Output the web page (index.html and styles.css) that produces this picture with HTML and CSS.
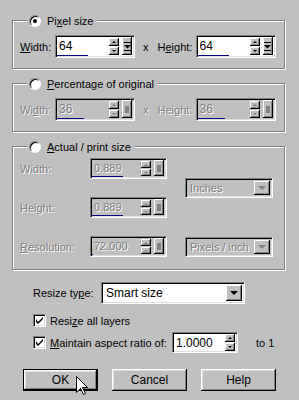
FILE: index.html
```html
<!DOCTYPE html>
<html lang="en">
<head>
    <meta charset="utf-8" />
    <title>Resize</title>
    <link rel="stylesheet" href="styles.css">
</head>
<body>
    <div class="dialog">
        <div class="group">
            <div class="group-title"><span class="radio on"></span><span>Pi<u>x</u>el size</span></div>
            <div class="row">
                <span class="lbl-w"><u>W</u>idth:</span>
                <div class="num">
                    <div class="num-main">
                        <span class="val">64</span>
                        <span class="spin"><i class="sb up"></i><i class="sb dn"></i></span>
                        <span class="pop"><svg width="7" height="9" viewBox="0 0 7 9"><rect x="0" y="0" width="7" height="1" fill="#000"/><path d="M0 3h7l-3.5 3.5z" fill="#000"/><rect x="0" y="8" width="7" height="1" fill="#000"/></svg></span>
                    </div>
                    <span class="bar" style="width:31px"></span>
                </div>
                <span class="times">x</span>
                <span class="lbl-h">H<u>e</u>ight:</span>
                <div class="num">
                    <div class="num-main">
                        <span class="val">64</span>
                        <span class="spin"><i class="sb up"></i><i class="sb dn"></i></span>
                        <span class="pop"><svg width="7" height="9" viewBox="0 0 7 9"><rect x="0" y="0" width="7" height="1" fill="#000"/><path d="M0 3h7l-3.5 3.5z" fill="#000"/><rect x="0" y="8" width="7" height="1" fill="#000"/></svg></span>
                    </div>
                    <span class="bar" style="width:31px"></span>
                </div>
            </div>
        </div>

        <div class="group">
            <div class="group-title"><span class="radio"></span><span><u>P</u>ercentage of original</span></div>
            <div class="row off">
                <span class="lbl-w">Wi<u>d</u>th:</span>
                <div class="num dis">
                    <div class="num-main">
                        <span class="val">36</span>
                        <span class="spin"><i class="sb up"></i><i class="sb dn"></i></span>
                        <span class="pop"><b class="sq"></b></span>
                    </div>
                    <span class="bar" style="width:27px"></span>
                </div>
                <span class="times">x</span>
                <span class="lbl-h">Hei<u>g</u>ht:</span>
                <div class="num dis">
                    <div class="num-main">
                        <span class="val">36</span>
                        <span class="spin"><i class="sb up"></i><i class="sb dn"></i></span>
                        <span class="pop"><b class="sq"></b></span>
                    </div>
                    <span class="bar" style="width:27px"></span>
                </div>
            </div>
        </div>

        <div class="group">
            <div class="group-title"><span class="radio"></span><span><u>A</u>ctual / print size</span></div>
            <div class="print off">
                <span class="plbl">Width:</span>
                <div class="num dis">
                    <div class="num-main">
                        <span class="val">0.889</span>
                        <span class="spin"><i class="sb up"></i><i class="sb dn"></i></span>
                        <span class="pop"><b class="sq"></b></span>
                    </div>
                    <span class="bar" style="width:31px"></span>
                </div>
                <div class="drop dis units">
                    <span class="drop-val">Inches</span>
                    <span class="drop-btn"><i class="tri"></i></span>
                </div>
                <span class="plbl">Height:</span>
                <div class="num dis">
                    <div class="num-main">
                        <span class="val">0.889</span>
                        <span class="spin"><i class="sb up"></i><i class="sb dn"></i></span>
                        <span class="pop"><b class="sq"></b></span>
                    </div>
                    <span class="bar" style="width:31px"></span>
                </div>
                <span class="plbl"><u>R</u>esolution:</span>
                <div class="num dis">
                    <div class="num-main">
                        <span class="val">72.000</span>
                        <span class="spin"><i class="sb up"></i><i class="sb dn"></i></span>
                        <span class="pop"><b class="sq"></b></span>
                    </div>
                    <span class="bar" style="width:1px"></span>
                </div>
                <div class="drop dis">
                    <span class="drop-val">Pixels / inch</span>
                    <span class="drop-btn"><i class="tri"></i></span>
                </div>
            </div>
        </div>

        <div class="resize-row">
            <span class="rlbl">Resize ty<u>p</u>e:</span>
            <div class="drop type">
                <span class="drop-val">Smart size</span>
                <span class="drop-btn"><i class="tri"></i></span>
            </div>
        </div>

        <div class="check-row">
            <span class="check"><svg width="7" height="7" viewBox="0 0 7 7"><path d="M0 2v3l2 2 5-5V0L2 5z" fill="#000"/></svg></span>
            <span>Resi<u>z</u>e all layers</span>
        </div>
        <div class="check-row ratio">
            <span class="check"><svg width="7" height="7" viewBox="0 0 7 7"><path d="M0 2v3l2 2 5-5V0L2 5z" fill="#000"/></svg></span>
            <span class="ratio-lbl"><u>M</u>aintain aspect ratio of:</span>
            <div class="num small">
                <div class="num-main">
                    <span class="val">1.0000</span>
                    <span class="spin"><i class="sb up"></i><i class="sb dn"></i></span>
                </div>
            </div>
            <span class="to">to 1</span>
        </div>

        <div class="buttons">
            <button class="btn default">OK</button>
            <button class="btn">Cancel</button>
            <button class="btn">Help</button>
        </div>

        <svg class="cursor" width="13" height="20" viewBox="0 0 13 20">
            <path d="M0.5 0.5V16.5L4.5 12.5L7.5 18.5L9.5 17.5L6.5 11.5H11.5Z" fill="#fff" stroke="#000" stroke-width="1"/>
        </svg>
    </div>
</body>
</html>
```

FILE: styles.css
```css
body{
    margin: 0;
    background: #c0c0c0;
    font: 11px "Liberation Sans", Arial, sans-serif;
    color: #000;
}
u{
    text-decoration: underline;
    text-underline-offset: 1px;
}
.dialog{
    position: relative;
    width: 299px;
    height: 400px;
    box-sizing: border-box;
    padding: 20px 14px 0 12px;
}

/* group boxes */
.group{
    border: 1px solid #808080;
    box-shadow: inset 1px 1px #fff, 1px 1px #fff;
    padding: 0 8px 10px 7px;
}
.group + .group{
    margin-top: 14px;
}
.group-title{
    display: flex;
    align-items: center;
    gap: 6px;
    width: fit-content;
    height: 13px;
    margin: -7px 0 0 7px;
    padding: 0 4px 0 2px;
    background: #c0c0c0;
    white-space: nowrap;
}
.radio{
    position: relative;
    width: 12px;
    height: 12px;
    box-sizing: border-box;
    border-radius: 50%;
    background: #fff;
    border: 1px solid;
    border-color: #808080 #fff #fff #808080;
    box-shadow: inset 1px 1px #000;
}
.radio.on::after{
    content: "";
    position: absolute;
    left: 3px;
    top: 3px;
    width: 4px;
    height: 4px;
    border-radius: 50%;
    background: #000;
}

.row{
    display: flex;
    align-items: center;
    margin-top: 8px;
}
.lbl-w{
    width: 35px;
}
.lbl-h{
    width: 38px;
}
.times{
    margin: 0 9px 0 8px;
}
.off .lbl-w,
.off .lbl-h,
.off .times,
.off .plbl,
.dis .val,
.dis .drop-val{
    color: #808080;
    text-shadow: 1px 1px #fff;
}

/* numeric edit with spinner and slider popup */
.num{
    display: flex;
    flex-direction: column;
    width: 80px;
    height: 23px;
    box-sizing: border-box;
    background: #fff;
    border: 1px solid;
    border-color: #808080 #fff #fff #808080;
    box-shadow: inset 1px 1px #000, inset -1px -1px #dfdfdf;
    padding: 1px 2px 1px 1px;
}
.num.dis{
    background: #c0c0c0;
}
.num-main{
    flex: 1;
    display: flex;
    align-items: center;
}
.val{
    flex: 1;
    padding-left: 2px;
    white-space: nowrap;
}
.row .val{
    font-size: 12px;
}
.spin{
    display: flex;
    flex-direction: column;
    width: 10px;
    height: 17px;
    gap: 1px;
}
.sb{
    position: relative;
    flex: 1;
    background: #c0c0c0;
    box-shadow: inset -1px -1px #000, inset 1px 1px #fff, inset -2px -2px #808080;
}
.sb::after{
    content: "";
    position: absolute;
    left: 3px;
    border-left: 2px solid transparent;
    border-right: 2px solid transparent;
}
.sb.up::after{
    top: 3px;
    border-bottom: 2px solid #000;
}
.sb.dn::after{
    top: 3px;
    border-top: 2px solid #000;
}
.dis .sb::after{
    border-bottom-color: #808080;
    border-top-color: #808080;
}
.pop{
    display: flex;
    align-items: center;
    justify-content: center;
    width: 10px;
    height: 18px;
    margin-left: 3px;
    background: #c0c0c0;
    box-shadow: inset -1px -1px #000, inset 1px 1px #fff, inset -2px -2px #808080;
}
.sq{
    width: 4px;
    height: 7px;
    background: #808080;
}
.bar{
    height: 2px;
    background: #000080;
}

/* actual / print size */
.print{
    display: grid;
    grid-template-columns: 70px 77px 106px;
    grid-template-rows: 21px 21px 21px;
    row-gap: 18px;
    align-items: center;
    margin-top: 5px;
    padding-bottom: 2px;
}
.print .num{
    width: 77px;
    height: 21px;
}
.print .spin{
    height: 15px;
}
.print .pop{
    height: 16px;
}
.print .drop{
    margin-left: 18px;
}
.units{
    grid-column: 3;
    grid-row: 1 / 3;
    align-self: center;
}

/* drop down */
.drop{
    display: flex;
    align-items: center;
    height: 20px;
    box-sizing: border-box;
    background: #fff;
    border: 1px solid;
    border-color: #808080 #fff #fff #808080;
    box-shadow: inset 1px 1px #000, inset -1px -1px #dfdfdf;
    padding: 2px;
}
.drop.dis{
    background: #c0c0c0;
}
.drop-val{
    flex: 1;
    padding-left: 2px;
    white-space: nowrap;
}
.drop-btn{
    display: flex;
    align-items: center;
    justify-content: center;
    width: 16px;
    align-self: stretch;
    background: #c0c0c0;
    box-shadow: inset -1px -1px #000, inset 1px 1px #fff, inset -2px -2px #808080;
}
.tri{
    border-left: 4px solid transparent;
    border-right: 4px solid transparent;
    border-top: 4px solid #000;
}
.dis .tri{
    border-top-color: #808080;
}

/* bottom options */
.resize-row{
    display: flex;
    align-items: center;
    margin: 12px 0 0 21px;
}
.rlbl{
    width: 68px;
}
.drop.type{
    width: 144px;
    height: 22px;
}
.type .drop-val{
    font-size: 12px;
}
.check-row{
    display: flex;
    align-items: center;
    gap: 4px;
    margin: 10px 0 0 21px;
}
.check-row.ratio{
    margin-top: 5px;
}
.check{
    display: flex;
    align-items: center;
    justify-content: center;
    width: 13px;
    height: 13px;
    box-sizing: border-box;
    background: #fff;
    border: 1px solid;
    border-color: #808080 #fff #fff #808080;
    box-shadow: inset 1px 1px #000, inset -1px -1px #dfdfdf;
}
.ratio-lbl{
    width: 118px;
}
.num.small{
    width: 66px;
    height: 21px;
}
.num.small .val{
    font-size: 12px;
}
.num.small .spin{
    height: 17px;
}
.to{
    margin-left: 14px;
}

.buttons{
    display: flex;
    gap: 13px;
    margin: 16px 0 0 11px;
}
.btn{
    width: 75px;
    height: 22px;
    padding: 0;
    font: 12px "Liberation Sans", Arial, sans-serif;
    color: #000;
    background: #c0c0c0;
    border: none;
    box-shadow: inset -1px -1px #000, inset 1px 1px #fff, inset -2px -2px #808080, inset 2px 2px #dfdfdf;
}
.btn.default{
    border: 1px solid #000;
}
.btn + .btn{
    margin-left: 1px;
}

.cursor{
    position: absolute;
    left: 76px;
    top: 376px;
}
```
